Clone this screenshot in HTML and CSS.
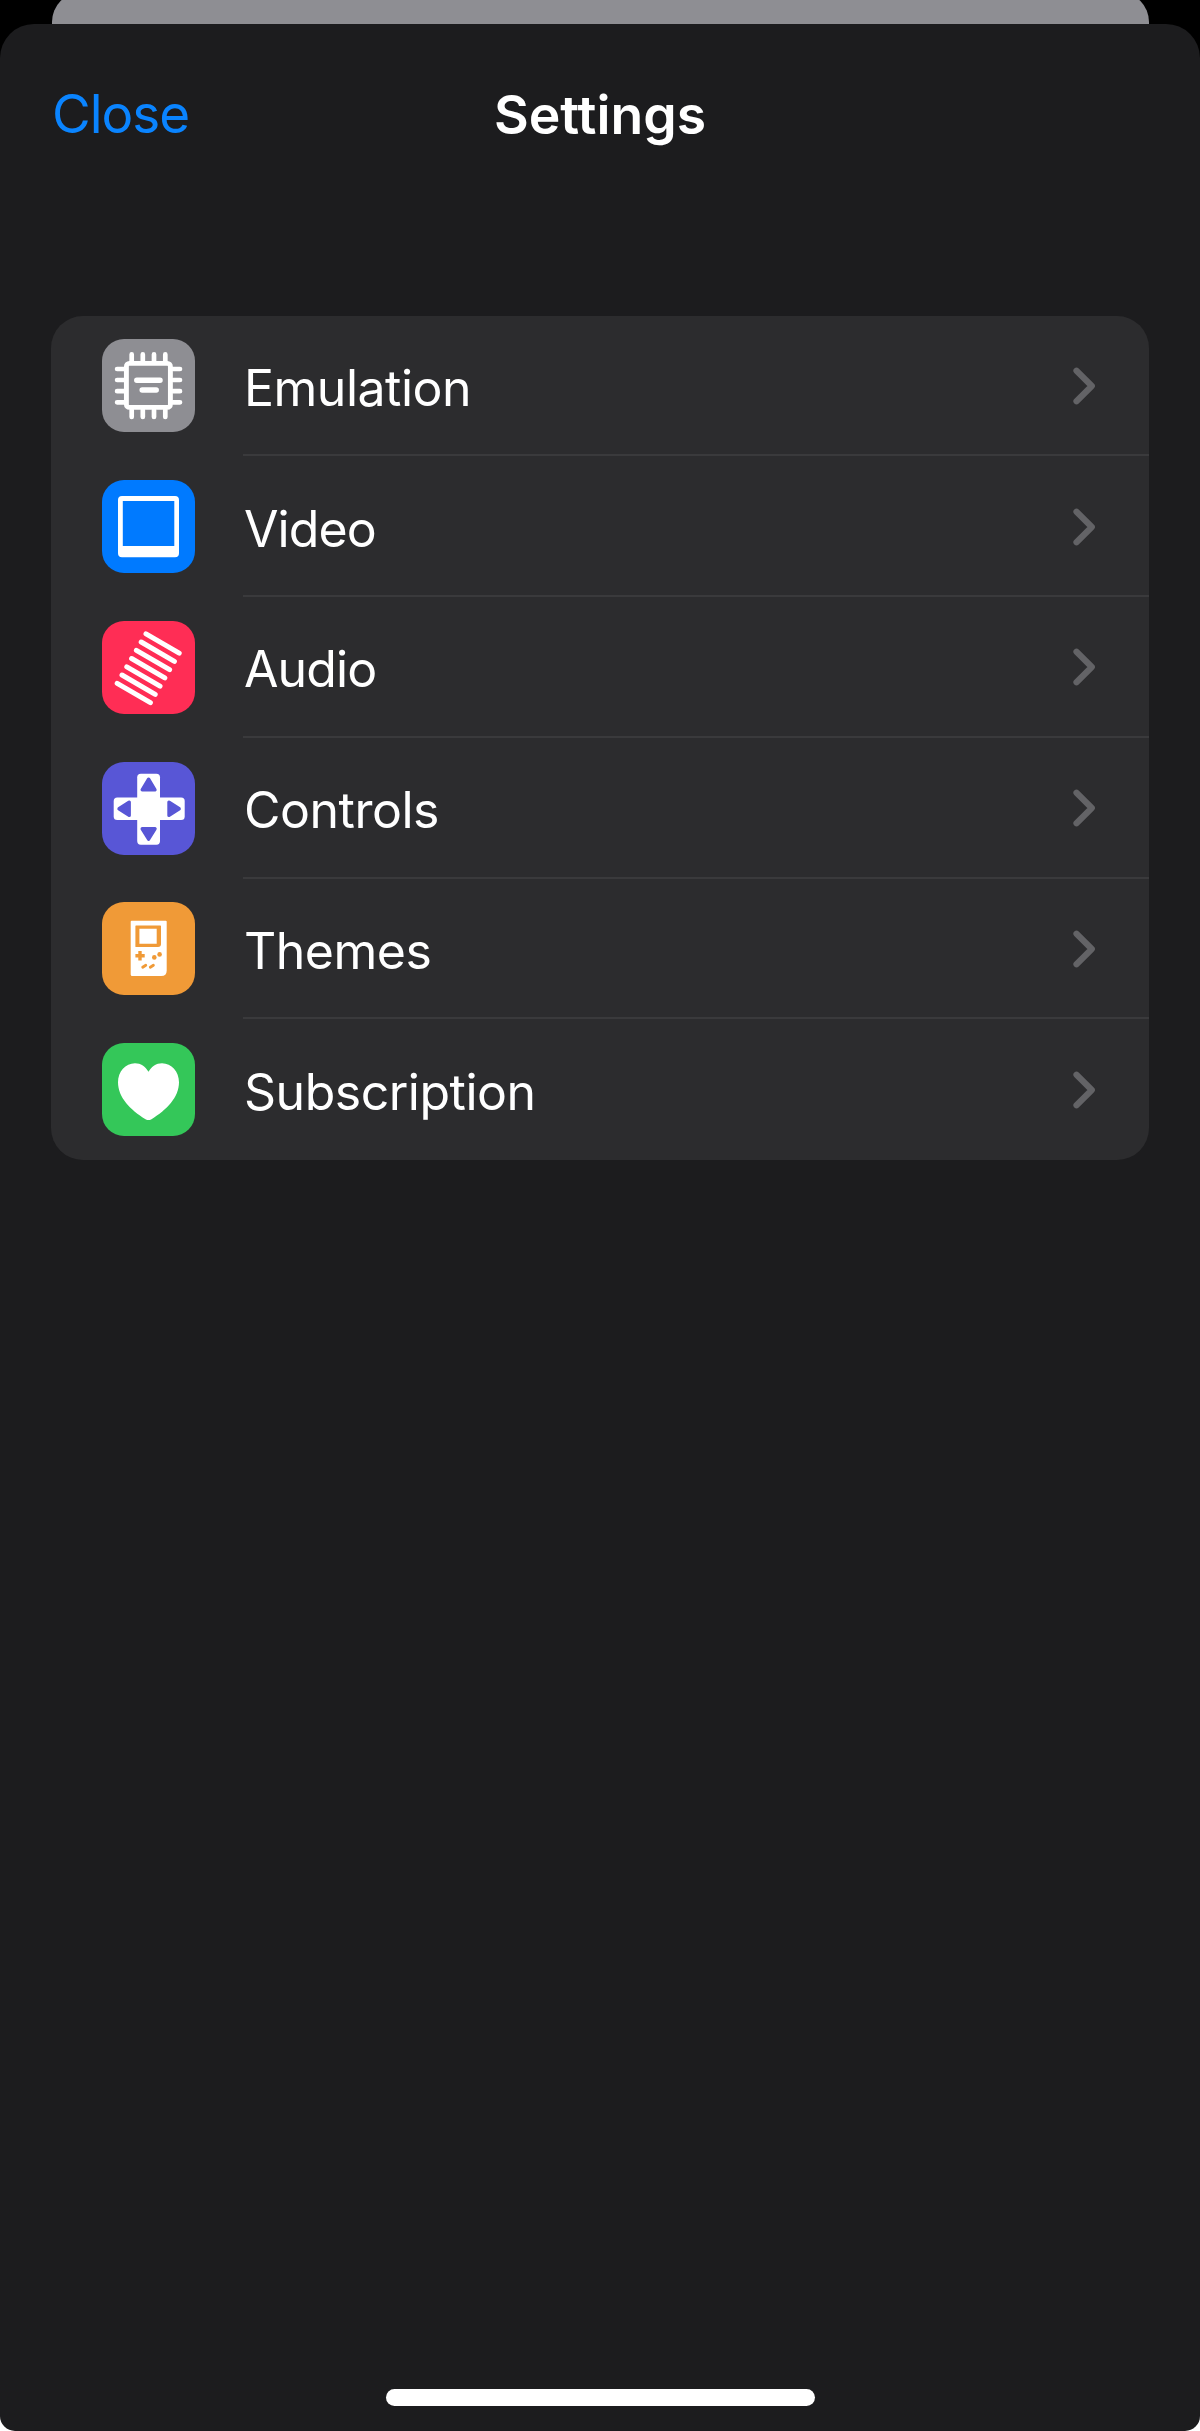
FILE: index.html
```html
<!DOCTYPE html>
<html lang="en">
<head>
<meta charset="utf-8">
<title>Settings</title>
<link rel="stylesheet" href="styles.css">
</head>
<body>
<div class="backdrop"></div>
<main class="sheet">
  <header class="nav">
    <a class="close">Close</a>
    <h1 class="title">Settings</h1>
  </header>
  <ul class="list">
    <li class="row">
      <svg class="icon gray" viewBox="0 0 93 93" fill="none" stroke="#fff" stroke-linecap="round">
        <rect x="24.4" y="24.4" width="44" height="44" rx="3" stroke-width="4.9"/>
        <path stroke-width="4.7" d="M29.7 22V15.4M40.8 22V15.4M52 22V15.4M63.3 22V15.4M29.7 71V78M40.8 71V78M52 71V78M63.3 71V78M22 30H15.1M22 41H15.1M22 52.2H15.1M22 63.3H15.1M71 30H78M71 41H78M71 52.2H78M71 63.3H78"/>
        <path stroke-width="5.5" d="M34.8 41.3H58M40.2 51H54.2"/>
      </svg>
      <div class="cell"><span class="label">Emulation</span><svg class="chevron" viewBox="0 0 22 38"><path d="M3.5 3.7L18.8 19L3.5 34.3"/></svg></div>
    </li>
    <li class="row">
      <svg class="icon blue" viewBox="0 0 93 93">
        <path fill="#fff" fill-rule="evenodd" d="M20 16H73Q77 16 77 20V73.3Q77 77.3 73 77.3H20Q16 77.3 16 73.3V20Q16 16 20 16ZM20.8 21V66H72.3V21Z"/>
      </svg>
      <div class="cell"><span class="label tight">Video</span><svg class="chevron" viewBox="0 0 22 38"><path d="M3.5 3.7L18.8 19L3.5 34.3"/></svg></div>
    </li>
    <li class="row">
      <svg class="icon red" viewBox="0 0 93 93" fill="none" stroke="#fff" stroke-width="5" stroke-linecap="round">
        <path d="M44 12.8l33.2 19.4M39.2 21l33.2 19.4M34.4 29.3l33.2 19.4M29.6 37.5l33.2 19.4M24.8 45.8l33.2 19.4M20 54l33.2 19.4M15.2 62.3l33.2 19.4"/>
      </svg>
      <div class="cell"><span class="label tight">Audio</span><svg class="chevron" viewBox="0 0 22 38"><path d="M3.5 3.7L18.8 19L3.5 34.3"/></svg></div>
    </li>
    <li class="row">
      <svg class="icon indigo" viewBox="0 0 93 93">
        <rect x="35.2" y="11.7" width="22.8" height="71" rx="3.6" fill="#fff"/>
        <rect x="11.7" y="35.5" width="71" height="22.6" rx="3.6" fill="#fff"/>
        <g fill="#5856d6" stroke="#5856d6" stroke-width="3.4" stroke-linejoin="round">
          <path d="M46.6 17.2L53 27.8H40.2Z"/>
          <path d="M46.6 77.2L53 66.8H40.2Z"/>
          <path d="M17 46.8L27.2 40.2V53.4Z"/>
          <path d="M77.2 46.8L67 40.2V53.4Z"/>
        </g>
      </svg>
      <div class="cell"><span class="label">Controls</span><svg class="chevron" viewBox="0 0 22 38"><path d="M3.5 3.7L18.8 19L3.5 34.3"/></svg></div>
    </li>
    <li class="row">
      <svg class="icon orange" viewBox="0 0 93 93">
        <path fill="#fff" d="M29.7 18.8H63.7Q64.7 18.8 64.7 19.8V68.5Q64.7 74 59.2 74H30.2Q28.7 74 28.7 72.5V19.8Q28.7 18.8 29.7 18.8Z"/>
        <path fill="#f09a37" d="M34 23.4H58.3Q59 23.4 59 24.1V42Q59 45 56 45H34Q33.4 45 33.4 44.4V24Q33.4 23.4 34 23.4Z"/>
        <path fill="#fff" d="M37.4 26.7H54.7V41.7H37.4Z"/>
        <g stroke="#f09a37" fill="none">
          <path stroke-width="3.4" d="M33.4 53.8H42.7M38 49.1V58.4"/>
          <path stroke-width="2.8" stroke-linecap="round" d="M40.7 65.3L43.8 63.3M48.3 65.3L51.4 63.3"/>
        </g>
        <circle cx="52.3" cy="55.4" r="2.3" fill="#f09a37"/>
        <circle cx="57.6" cy="52.4" r="2.3" fill="#f09a37"/>
      </svg>
      <div class="cell"><span class="label">Themes</span><svg class="chevron" viewBox="0 0 22 38"><path d="M3.5 3.7L18.8 19L3.5 34.3"/></svg></div>
    </li>
    <li class="row">
      <svg class="icon green" viewBox="0 0 93 93">
        <path fill="#fff" d="M46.5 28.8C43.5 23.5 38.8 20.2 33 20.2C23.5 20.2 16 28.5 16 39.3C16 54.5 28.5 67 43.5 76.2C45.6 77.4 47.4 77.4 49.5 76.2C64.5 67 77 54.5 77 39.3C77 28.5 69.5 20.2 60 20.2C54.2 20.2 49.5 23.5 46.5 28.8Z"/>
      </svg>
      <div class="cell"><span class="label">Subscription</span><svg class="chevron" viewBox="0 0 22 38"><path d="M3.5 3.7L18.8 19L3.5 34.3"/></svg></div>
    </li>
  </ul>
  <div class="home-indicator"></div>
</main>
</body>
</html>
```
FILE: styles.css
```css
* { box-sizing: border-box; }
html { background: #fff; overflow: hidden; }
body {
  margin: 0;
  width: 1200px;
  height: 2431px;
  overflow: hidden;
  display: flex;
  flex-direction: column;
  background: linear-gradient(#000 50%, #fff 50%);
  font-family: Inter, "Liberation Sans", sans-serif;
  color: #fff;
}
.backdrop {
  height: 32px;
  margin: -8px 51px 0 52px;
  flex: none;
  background: #8e8e93;
  border-radius: 30px 30px 0 0;
}
.sheet {
  flex: 1;
  display: flex;
  flex-direction: column;
  background: #1c1c1e;
  border-radius: 34px 34px 15px 15px;
}
.nav {
  display: grid;
  grid-template-columns: 1fr auto 1fr;
  align-items: center;
  height: 180px;
  padding: 0 52px;
}
.close { font-size: 53px; color: #0a84ff; letter-spacing: -1px; }
.title { margin: 0; font-size: 53.5px; font-weight: 600; letter-spacing: 0; }
.list {
  list-style: none;
  margin: 111.5px 51px 0;
  padding: 0;
  height: 844.5px;
  display: grid;
  grid-template-rows: repeat(6, 1fr);
  background: #2c2c2e;
  border-radius: 32px;
}
.row { display: flex; align-items: center; padding-left: 51px; }
.icon { width: 93px; height: 93px; border-radius: 22px; flex: none; }
.gray { background: #8e8e93; }
.blue { background: #007aff; }
.red { background: #ff2d55; }
.indigo { background: #5856d6; }
.orange { background: #f09a37; }
.green { background: #34c759; }
.cell {
  flex: 1;
  align-self: stretch;
  display: flex;
  align-items: center;
  justify-content: space-between;
  margin-left: 48px;
  padding: 2px 54px 0 1px;
  border-bottom: 2px solid #3a3a3c;
}
.row:last-child .cell { border-bottom: 0; padding-top: 0; }
.label { font-size: 50px; line-height: 60px; padding-top: 4px; letter-spacing: -0.5px; }
.tight { letter-spacing: -0.9px; }
.chevron {
  width: 22px;
  height: 38px;
  fill: none;
  stroke: #636366;
  stroke-width: 6.2;
  stroke-linecap: round;
  stroke-linejoin: round;
}
.home-indicator {
  width: 429px;
  height: 17px;
  margin: auto auto 25px 386px;
  border-radius: 9px;
  background: #fff;
}
```
